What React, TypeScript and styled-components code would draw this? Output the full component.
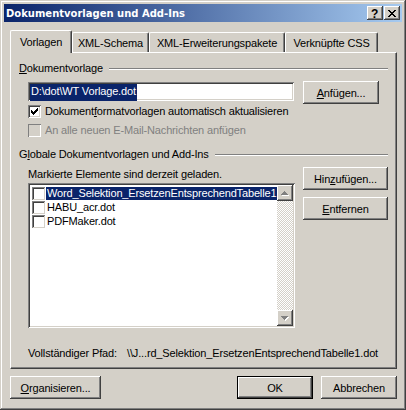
import React from "react";
import styled, { createGlobalStyle } from "styled-components";

const GlobalStyle = createGlobalStyle`
  html, body {
    margin: 0;
    padding: 0;
    background: #d4d0c8;
  }
  body {
    font-family: "Liberation Sans", Arial, sans-serif;
    font-size: 11px;
    letter-spacing: -0.15px;
    color: #000;
  }
  * {
    box-sizing: border-box;
  }
`;

const raised =
  "inset -1px -1px #404040, inset 1px 1px #fff, inset -2px -2px #808080, inset 2px 2px #d4d0c8";
const sunken =
  "inset 1px 1px #808080, inset -1px -1px #fff, inset 2px 2px #404040, inset -2px -2px #d4d0c8";

const tabs = [
  { label: "Vorlagen", width: 62 },
  { label: "XML-Schema", width: 77 },
  { label: "XML-Erweiterungspakete", width: 136 },
  { label: "Verknüpfte CSS", width: 93 },
];

const templates = [
  "Word_Selektion_ErsetzenEntsprechendTabelle1.dot",
  "HABU_acr.dot",
  "PDFMaker.dot",
];

function CheckMark() {
  return (
    <svg width="7" height="7" viewBox="0 0 7 7" shapeRendering="crispEdges">
      <path
        d="M0 2h1v3H0z M1 3h1v3H1z M2 4h1v3H2z M3 3h1v3H3z M4 2h1v3H4z M5 1h1v3H5z M6 0h1v3H6z"
        fill="#000"
      />
    </svg>
  );
}

function CloseGlyph() {
  return (
    <svg width="8" height="7" viewBox="0 0 8 7" shapeRendering="crispEdges">
      <path
        d="M0 0h2v1H0z M6 0h2v1H6z M1 1h2v1H1z M5 1h2v1H5z M2 2h4v1H2z M3 3h2v1H3z M2 4h4v1H2z M1 5h2v1H1z M5 5h2v1H5z M0 6h2v1H0z M6 6h2v1H6z"
        fill="#000"
      />
    </svg>
  );
}

function Arrow({ down }: { down?: boolean }) {
  const tri = down
    ? "M0 0h7v1H6v1H5v1H4v1H3V3H2V2H1V1H0z"
    : "M3 0h1v1h1v1h1v1h1v1H0V3h1V2h1V1h1z";
  return (
    <svg width="8" height="5" viewBox="0 0 8 5" shapeRendering="crispEdges">
      <path d={tri} fill="#fff" transform="translate(1 1)" />
      <path d={tri} fill="#808080" />
    </svg>
  );
}

export default function App() {
  return (
    <>
      <GlobalStyle />
      <Window>
        <TitleBar>
          <Title>Dokumentvorlagen und Add-Ins</Title>
          <CaptionButton>
            <HelpGlyph>?</HelpGlyph>
          </CaptionButton>
          <CaptionButton $last>
            <CloseGlyph />
          </CaptionButton>
        </TitleBar>
        <Body>
          <TabStrip>
            {tabs.map((tab, idx) => (
              <Tab key={tab.label} $active={idx === 0} $width={tab.width}>
                {tab.label}
              </Tab>
            ))}
          </TabStrip>
          <Panel>
            <GroupHeader>
              <span>
                <Key>D</Key>okumentvorlage
              </span>
              <Rule />
            </GroupHeader>
            <GroupBody>
              <FieldRow>
                <TextField>
                  <Selection>D:\dot\WT Vorlage.dot</Selection>
                </TextField>
                <Button $width={76}>
                  <Key>A</Key>nfügen...
                </Button>
              </FieldRow>
              <CheckRow>
                <CheckBox>
                  <CheckMark />
                </CheckBox>
                <span>
                  Dokument<Key>f</Key>ormatvorlagen automatisch aktualisieren
                </span>
              </CheckRow>
              <CheckRow $disabled>
                <CheckBox $disabled />
                <span>An alle neuen E-Mail-Nachrichten anfügen</span>
              </CheckRow>
            </GroupBody>

            <GroupHeader $spaced>
              <span>
                G<Key>l</Key>obale Dokumentvorlagen und Add-Ins
              </span>
              <Rule />
            </GroupHeader>
            <GroupBody>
              <ListSection>
                <ListColumn>
                  <Caption>Markierte Elemente sind derzeit geladen.</Caption>
                  <ListBox>
                    <ListItems>
                      {templates.map((name, idx) => (
                        <ListItem key={name}>
                          <CheckBox $small />
                          <ItemText $selected={idx === 0}>{name}</ItemText>
                        </ListItem>
                      ))}
                    </ListItems>
                    <ScrollBar>
                      <ScrollArrow>
                        <Arrow />
                      </ScrollArrow>
                      <ScrollTrack />
                      <ScrollArrow>
                        <Arrow down />
                      </ScrollArrow>
                    </ScrollBar>
                  </ListBox>
                </ListColumn>
                <ButtonColumn>
                  <Button $width={85}>
                    Hin<Key>z</Key>ufügen...
                  </Button>
                  <Button $width={85}>
                    <Key>E</Key>ntfernen
                  </Button>
                </ButtonColumn>
              </ListSection>
              <PathRow>
                <PathLabel>Vollständiger Pfad:</PathLabel>
                <span>\\J...rd_Selektion_ErsetzenEntsprechendTabelle1.dot</span>
              </PathRow>
            </GroupBody>
          </Panel>
          <Footer>
            <Button $width={91}>
              <Key>O</Key>rganisieren...
            </Button>
            <Spacer />
            <Button $width={76} $default>
              OK
            </Button>
            <Button $width={76}>Abbrechen</Button>
          </Footer>
        </Body>
      </Window>
    </>
  );
}

interface TabProps {
  $active?: boolean;
  $width: number;
}
interface ButtonProps {
  $width: number;
  $default?: boolean;
}
interface CheckProps {
  $disabled?: boolean;
  $small?: boolean;
}

const Window = styled.div`
  width: 406px;
  height: 410px;
  padding: 4px;
  background: #d4d0c8;
  box-shadow: inset -1px -1px #404040, inset 1px 1px #d4d0c8,
    inset -2px -2px #808080, inset 2px 2px #fff;
  display: flex;
  flex-direction: column;
`;
const TitleBar = styled.div`
  height: 18px;
  display: flex;
  align-items: center;
  padding: 0 2px;
  background: linear-gradient(to right, #0a246a, #a6caf0);
`;
const Title = styled.div`
  flex: 1;
  color: #fff;
  font-family: "DejaVu Sans", Verdana, sans-serif;
  font-weight: bold;
  font-size: 10px;
  letter-spacing: 0;
  white-space: nowrap;
`;
const CaptionButton = styled.div<{ $last?: boolean }>`
  width: 16px;
  height: 14px;
  margin-left: ${(p) => (p.$last ? "1px" : "0")};
  background: #d4d0c8;
  box-shadow: ${raised};
  display: flex;
  align-items: center;
  justify-content: center;
  padding: 1px 1px 0 0;
`;
const HelpGlyph = styled.span`
  font-weight: bold;
  font-size: 12px;
  line-height: 12px;
`;
const Body = styled.div`
  flex: 1;
  display: flex;
  flex-direction: column;
  padding: 8px 5px 0 6px;
`;
const TabStrip = styled.div`
  height: 22px;
  display: flex;
  align-items: flex-end;
`;
const Tab = styled.div<TabProps>`
  width: ${(p) => p.$width}px;
  height: ${(p) => (p.$active ? 23 : 20)}px;
  margin-bottom: ${(p) => (p.$active ? "-1px" : "0")};
  position: relative;
  z-index: ${(p) => (p.$active ? 1 : 0)};
  background: #d4d0c8;
  border-top: 1px solid #fff;
  border-left: 1px solid #fff;
  border-right: 1px solid #404040;
  border-radius: 2px 2px 0 0;
  box-shadow: inset -1px 0 #808080;
  display: flex;
  justify-content: center;
  padding-top: ${(p) => (p.$active ? 5 : 4)}px;
  line-height: 13px;
  white-space: nowrap;
`;
const Panel = styled.div`
  height: 317px;
  border-top: 1px solid #fff;
  border-left: 1px solid #fff;
  border-right: 1px solid #404040;
  border-bottom: 1px solid #404040;
  box-shadow: inset -1px -1px #808080;
  padding: 9px 8px 0 8px;
  display: flex;
  flex-direction: column;
`;
const GroupHeader = styled.div<{ $spaced?: boolean }>`
  height: 13px;
  line-height: 13px;
  display: flex;
  align-items: center;
  margin-top: ${(p) => (p.$spaced ? "11px" : "0")};
  white-space: nowrap;
`;
const Rule = styled.div`
  flex: 1;
  margin-left: 6px;
  border-top: 1px solid #808080;
  border-bottom: 1px solid #fff;
`;
const Key = styled.span`
  text-decoration: underline;
`;
const GroupBody = styled.div`
  padding-left: 9px;
  display: flex;
  flex-direction: column;
`;
const FieldRow = styled.div`
  margin-top: 6px;
  display: flex;
  align-items: flex-start;
`;
const TextField = styled.div`
  width: 266px;
  height: 19px;
  margin: 1px 9px 0 0;
  background: #fff;
  box-shadow: ${sunken};
  padding: 2px 2px 0 2px;
  display: flex;
`;
const Selection = styled.span`
  background: #0a246a;
  color: #fff;
  line-height: 14px;
  padding: 0 1px;
  white-space: nowrap;
`;
const Button = styled.div<ButtonProps>`
  width: ${(p) => p.$width}px;
  height: 23px;
  flex-shrink: 0;
  background: #d4d0c8;
  box-shadow: ${(p) =>
    p.$default
      ? "inset 0 0 0 1px #000, inset -2px -2px #404040, inset 2px 2px #fff, inset -3px -3px #808080"
      : raised};
  display: flex;
  align-items: center;
  justify-content: center;
  white-space: nowrap;
`;
const CheckRow = styled.div<CheckProps>`
  display: flex;
  align-items: center;
  height: 13px;
  margin-top: ${(p) => (p.$disabled ? "6px" : "1px")};
  color: ${(p) => (p.$disabled ? "#808080" : "#000")};
  white-space: nowrap;
  > span {
    margin-left: 4px;
    line-height: 13px;
  }
`;
const CheckBox = styled.div<CheckProps>`
  width: 13px;
  height: 13px;
  flex-shrink: 0;
  background: ${(p) => (p.$disabled ? "#d4d0c8" : "#fff")};
  box-shadow: ${(p) =>
    p.$disabled
      ? "inset 1px 1px #808080, inset -1px -1px #fff"
      : p.$small
      ? "inset 1px 1px #808080, inset -1px -1px #d4d0c8, inset 2px 2px #404040"
      : sunken};
  display: flex;
  align-items: center;
  justify-content: center;
`;
const ListSection = styled.div`
  margin-top: 6px;
  display: flex;
  align-items: flex-start;
`;
const ListColumn = styled.div`
  width: 267px;
  display: flex;
  flex-direction: column;
`;
const Caption = styled.div`
  margin-top: 1px;
  line-height: 13px;
  white-space: nowrap;
`;
const ListBox = styled.div`
  margin-top: 2px;
  height: 145px;
  padding: 2px;
  background: #fff;
  box-shadow: ${sunken};
  display: flex;
`;
const ListItems = styled.div`
  flex: 1;
  overflow: hidden;
  padding-top: 1px;
`;
const ListItem = styled.div`
  height: 14px;
  display: flex;
  align-items: center;
  padding-left: 2px;
`;
const ItemText = styled.span<{ $selected?: boolean }>`
  margin-left: 1px;
  padding: 0 1px;
  line-height: 13px;
  white-space: nowrap;
  background: ${(p) => (p.$selected ? "#0a246a" : "transparent")};
  color: ${(p) => (p.$selected ? "#fff" : "#000")};
`;
const ScrollBar = styled.div`
  width: 16px;
  display: flex;
  flex-direction: column;
`;
const ScrollArrow = styled.div`
  height: 16px;
  background: #d4d0c8;
  box-shadow: ${raised};
  display: flex;
  align-items: center;
  justify-content: center;
`;
const ScrollTrack = styled.div`
  flex: 1;
  background: repeating-conic-gradient(#d4d0c8 0 25%, #fff 0 50%) 0 0 / 2px 2px;
`;
const ButtonColumn = styled.div`
  margin-left: 8px;
  display: flex;
  flex-direction: column;
  gap: 7px;
`;
const PathRow = styled.div`
  margin-top: 19px;
  display: flex;
  line-height: 13px;
  white-space: nowrap;
`;
const PathLabel = styled.span`
  width: 99px;
`;
const Footer = styled.div`
  margin-top: 7px;
  display: flex;
  gap: 8px;
`;
const Spacer = styled.div`
  flex: 1;
`;
